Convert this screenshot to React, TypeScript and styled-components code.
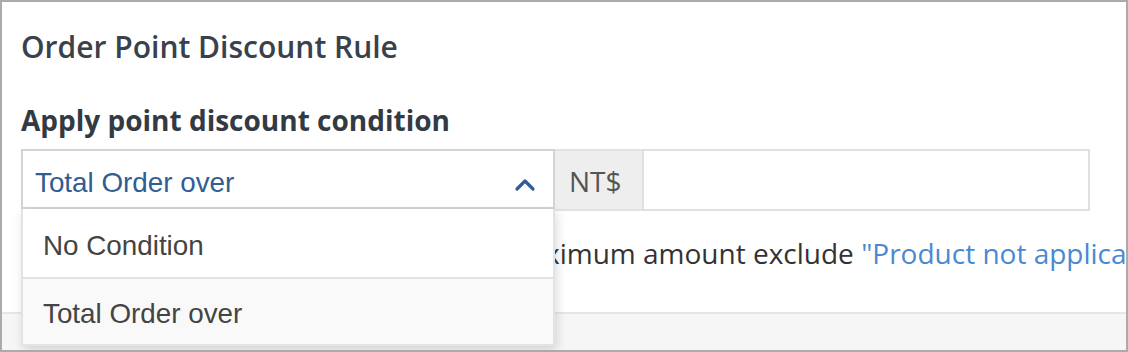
import React from "react";
import styled, { createGlobalStyle } from "styled-components";

const GlobalStyle = createGlobalStyle`
  html, body { margin: 0; padding: 0; background: #ffffff; }
  * { box-sizing: border-box; }
`;

const Frame = styled.div`
  width: 1128px;
  height: 352px;
  border: 2px solid #ababab;
  background: #ffffff;
  display: flex;
  flex-direction: column;
  overflow: hidden;
  font-family: "Open Sans", "Liberation Sans", sans-serif;
`;

const Body = styled.div`
  flex: 1;
  padding: 25px 19px 0 19px;
  display: flex;
  flex-direction: column;
`;

const Title = styled.h2`
  margin: 0;
  font-size: 30px;
  line-height: 40px;
  font-weight: 600;
  color: #3a414b;
`;

const Label = styled.div`
  margin-top: 33px;
  font-size: 28px;
  line-height: 40px;
  font-weight: 700;
  color: #333a44;
`;

const InputGroup = styled.div`
  margin-top: 9px;
  display: flex;
  width: 1069px;
  height: 62px;
`;

const SelectWrap = styled.div`
  position: relative;
  width: 534px;
  flex: none;
`;

const SelectBox = styled.div`
  height: 60px;
  border: 2px solid #d4d4d4;
  background: #ffffff;
  display: flex;
  align-items: center;
  justify-content: space-between;
  padding: 8px 17px 0 12px;
  font-family: "Liberation Sans", Arial, sans-serif;
  font-size: 27.8px;
  color: #2f5d94;
`;

const Chevron = styled.svg`
  width: 22px;
  height: 14px;
  margin-top: 4px;
`;

const Menu = styled.ul`
  position: absolute;
  top: 60px;
  left: 0;
  width: 534px;
  margin: 0;
  padding: 0;
  list-style: none;
  background: #ffffff;
  border: 2px solid #e3e3e3;
  border-top: none;
  box-shadow: 2px 4px 10px rgba(0, 0, 0, 0.14);
  z-index: 2;
`;

const Option = styled.li<{ $active?: boolean }>`
  height: ${(p) => (p.$active ? "67px" : "68px")};
  display: flex;
  align-items: center;
  padding: 5px 0 0 20px;
  font-family: "Liberation Sans", Arial, sans-serif;
  font-size: 27.8px;
  color: #444444;
  background: ${(p) => (p.$active ? "#f9f9f9" : "#ffffff")};
  & + & {
    border-top: 2px solid #e2e2e2;
  }
`;

const Addon = styled.div`
  width: 87px;
  flex: none;
  background: #eeeeee;
  border-top: 2px solid #e2e2e2;
  border-bottom: 2px solid #e2e2e2;
  display: flex;
  align-items: center;
  padding: 2px 0 0 14px;
  font-size: 28px;
  color: #555555;
`;

const TextInput = styled.div`
  flex: 1;
  border: 2px solid #e0e0e0;
  background: #ffffff;
`;

const Help = styled.p`
  margin: 22px 0 0 0;
  font-size: 28px;
  line-height: 40px;
  color: #333333;
  white-space: nowrap;
`;

const Link = styled.a`
  color: #4a89d2;
  text-decoration: none;
`;

const Footer = styled.div`
  height: 38px;
  flex: none;
  border-top: 2px solid #e6e6e6;
  background: #f6f6f6;
`;

export default function App() {
  return (
    <>
      <GlobalStyle />
      <Frame>
        <Body>
          <Title>Order Point Discount Rule</Title>
          <Label>Apply point discount condition</Label>
          <InputGroup>
            <SelectWrap>
              <SelectBox>
                <span>Total Order over</span>
                <Chevron viewBox="0 0 22 14" fill="none">
                  <path
                    d="M3 11 L11 3 L19 11"
                    stroke="#2f5d94"
                    strokeWidth="3.2"
                    strokeLinecap="round"
                    strokeLinejoin="round"
                  />
                </Chevron>
              </SelectBox>
              <Menu>
                <Option>No Condition</Option>
                <Option $active>Total Order over</Option>
              </Menu>
            </SelectWrap>
            <Addon>NT$</Addon>
            <TextInput />
          </InputGroup>
          <Help>
            The order total is calculated with the maximum amount exclude{" "}
            <Link href="#">"Product not applicable"</Link>
          </Help>
        </Body>
        <Footer />
      </Frame>
    </>
  );
}
